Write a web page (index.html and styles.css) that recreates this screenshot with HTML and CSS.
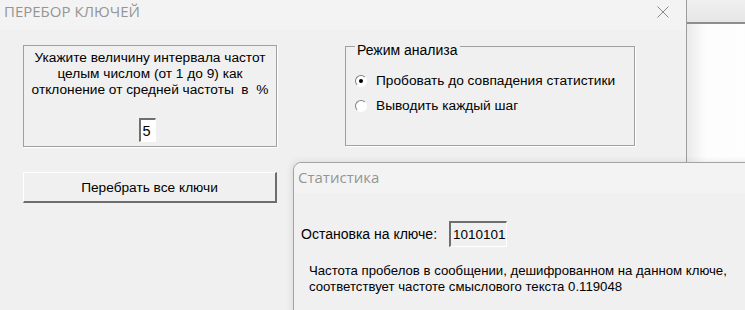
FILE: index.html
```html
<!DOCTYPE html>
<html>
<head>
    <title>Перебор ключей</title>
    <link rel="stylesheet" href="styles.css">
</head>
<body>
    <div class="desk">
        <div class="win back">
            <div class="back-head"></div>
            <div class="back-body"></div>
        </div>

        <div class="win keys">
            <div class="title">
                <span>ПЕРЕБОР КЛЮЧЕЙ</span>
                <svg class="close" width="12" height="12" viewBox="0 0 12 12">
                    <path d="M0.5 0.5 L11.5 11.5 M11.5 0.5 L0.5 11.5" stroke="#8a8a8a" stroke-width="1" fill="none"/>
                </svg>
            </div>
            <div class="keys-body">
                <div class="col">
                    <div class="group interval">
                        <p>Укажите величину интервала частот<br>целым числом (от 1 до 9) как<br>отклонение от средней частоты&nbsp; в&nbsp; %</p>
                        <div class="edit digit">5</div>
                    </div>
                    <button class="btn">Перебрать все ключи</button>
                </div>
                <fieldset class="group mode">
                    <legend>Режим анализа</legend>
                    <label class="radio"><span class="dot checked"></span>Пробовать до совпадения статистики</label>
                    <label class="radio"><span class="dot"></span>Выводить каждый шаг</label>
                </fieldset>
            </div>
        </div>

        <div class="win stats">
            <div class="title">
                <span>Статистика</span>
            </div>
            <div class="stats-body">
                <div class="stop-row">
                    <span>Остановка на ключе:</span>
                    <div class="edit key">1010101</div>
                </div>
                <p class="note">Частота пробелов в сообщении, дешифрованном на данном ключе,<br>соответствует частоте смыслового текста 0.119048</p>
            </div>
        </div>
    </div>
</body>
</html>
```

FILE: styles.css
```css
body {
    margin: 0;
    background-color: #f0f0f0;
    font-family: 'Liberation Sans', Arial, sans-serif;
    font-size: 13px;
    color: #000;
    overflow: hidden;
}
.desk {
    position: relative;
    width: 745px;
    height: 310px;
    overflow: hidden;
}
.win {
    position: absolute;
    box-sizing: border-box;
    background-color: #f0f0f0;
}
.title {
    height: 30px;
    display: flex;
    align-items: flex-start;
    justify-content: space-between;
    padding: 1px 15px 0 5px;
    box-sizing: border-box;
    font-family: 'Open Sans', 'Noto Sans', sans-serif;
    font-size: 15px;
    color: #959595;
    background-color: #f3f3f3;
}
.close {
    margin-top: 5px;
    margin-right: 2px;
}

/* window behind */
.back {
    left: 686px;
    top: 0;
    width: 120px;
    height: 200px;
    background-color: #fff;
}
.back-head {
    height: 22px;
    background: linear-gradient(#f0f0f0, #e6e6e6);
    border-bottom: 2px solid #8e8e8e;
}
.back-body {
    height: 150px;
    background: linear-gradient(90deg, #e9e9e9, #fdfdfd 20px, #fff);
}

/* main dialog */
.keys {
    left: -1px;
    top: 0;
    width: 688px;
    height: 360px;
    border-right: 1px solid #9d9d9d;
}
.keys-body {
    display: flex;
    align-items: flex-start;
    gap: 68px;
    padding: 15px 0 0 24px;
}
.col {
    display: flex;
    flex-direction: column;
    gap: 25px;
    width: 254px;
}
.group {
    box-sizing: border-box;
    border: 1px solid #a0a0a0;
    box-shadow: 1px 1px 0 #fff;
    margin: 0;
}
.interval {
    height: 102px;
    display: flex;
    flex-direction: column;
    align-items: center;
}
.interval p {
    margin: 4px 0 0;
    font-size: 13.7px;
    line-height: 16px;
    text-align: center;
}
.edit {
    box-sizing: border-box;
    border-top: 2px solid #6f6f6f;
    border-left: 2px solid #6f6f6f;
    border-right: 1px solid #fff;
    border-bottom: 1px solid #fff;
    background-color: #fff;
    line-height: 18px;
}
.digit {
    margin: 20px 6px 0 0;
    width: 17px;
    height: 24px;
    padding: 2px 0 0 2px;
    font-size: 14.5px;
}
.btn {
    height: 31px;
    box-sizing: border-box;
    font-family: 'Liberation Sans', Arial, sans-serif;
    font-size: 13.7px;
    color: #000;
    background-color: #f0f0f0;
    border-top: 1px solid #fff;
    border-left: 1px solid #fff;
    border-right: 2px solid #6d6d6d;
    border-bottom: 2px solid #6d6d6d;
    padding: 0;
}
.mode {
    width: 290px;
    height: 111px;
    margin-top: -10px;
    padding: 15px 0 0 9px;
    display: flex;
    flex-direction: column;
    gap: 8px;
    font-size: 13.7px;
}
.mode legend {
    padding: 8px 2px 0;
    margin-left: 0;
    font-size: 14px;
    line-height: 14px;
}
.radio {
    display: flex;
    align-items: center;
    gap: 9px;
    height: 17px;
}
.dot {
    width: 12px;
    height: 12px;
    box-sizing: border-box;
    border-radius: 50%;
    border: 1px solid;
    border-color: #808080 #fff #fff #808080;
    background-color: #fff;
    display: flex;
    align-items: center;
    justify-content: center;
}
.dot.checked::after {
    content: "";
    width: 4px;
    height: 4px;
    border-radius: 50%;
    background-color: #000;
}

/* statistics dialog */
.stats {
    left: 293px;
    top: 162px;
    width: 480px;
    height: 180px;
    border: 1px solid #a3a3a3;
    border-radius: 8px 0 0 0;
    box-shadow: -2px -1px 6px rgba(0, 0, 0, 0.08);
}
.stats .title {
    border-radius: 8px 0 0 0;
    padding-left: 4px;
    padding-top: 4px;
}
.stats-body {
    padding: 28px 0 0 7px;
}
.stop-row {
    display: flex;
    align-items: center;
    gap: 12px;
    font-size: 14px;
}
.key {
    width: 58px;
    height: 26px;
    padding: 3px 0 0 2px;
    background-color: #f0f0f0;
    font-size: 13.5px;
}
.note {
    margin: 16px 0 0 8px;
    font-size: 13.2px;
    line-height: 16px;
}
```
